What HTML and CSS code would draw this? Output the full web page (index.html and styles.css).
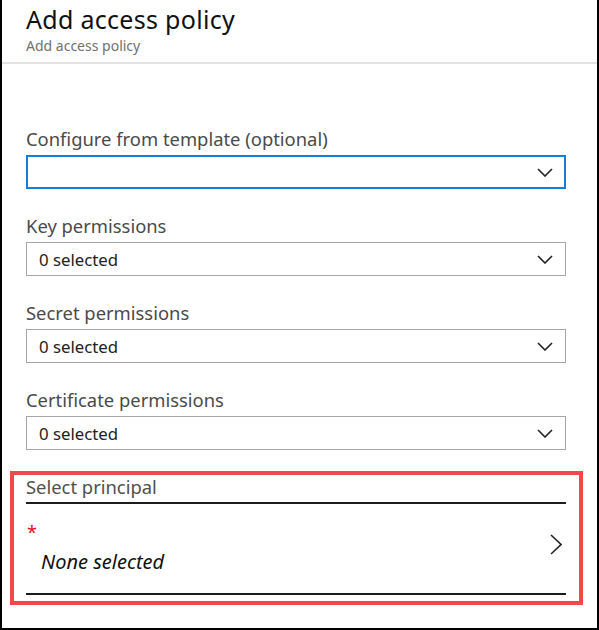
FILE: index.html
```html
<!DOCTYPE html>
<html>
<head>
<meta charset="utf-8">
<link rel="stylesheet" href="styles.css">
</head>
<body>
<div class="panel">
  <header class="head">
    <h1 class="title">Add access policy</h1>
    <div class="subtitle">Add access policy</div>
  </header>
  <div class="body">
    <div class="field">
      <div class="label">Configure from template (optional)</div>
      <div class="select focus">
        <span class="value"></span>
        <svg class="chev" width="16" height="9" viewBox="0 0 16 9"><path d="M1 1 L8 8 L15 1" fill="none" stroke="#222" stroke-width="1.6"/></svg>
      </div>
    </div>
    <div class="field">
      <div class="label">Key permissions</div>
      <div class="select">
        <span class="value">0 selected</span>
        <svg class="chev" width="16" height="9" viewBox="0 0 16 9"><path d="M1 1 L8 8 L15 1" fill="none" stroke="#222" stroke-width="1.6"/></svg>
      </div>
    </div>
    <div class="field">
      <div class="label">Secret permissions</div>
      <div class="select">
        <span class="value">0 selected</span>
        <svg class="chev" width="16" height="9" viewBox="0 0 16 9"><path d="M1 1 L8 8 L15 1" fill="none" stroke="#222" stroke-width="1.6"/></svg>
      </div>
    </div>
    <div class="field">
      <div class="label">Certificate permissions</div>
      <div class="select">
        <span class="value">0 selected</span>
        <svg class="chev" width="16" height="9" viewBox="0 0 16 9"><path d="M1 1 L8 8 L15 1" fill="none" stroke="#222" stroke-width="1.6"/></svg>
      </div>
    </div>
    <div class="highlight">
      <div class="principal-label">Select principal</div>
      <div class="principal">
        <div class="principal-text">
          <span class="star">*</span>
          <span class="none">None selected</span>
        </div>
        <svg class="chev-right" width="12" height="21" viewBox="0 0 12 21"><path d="M1 1 L11 10.5 L1 20" fill="none" stroke="#222" stroke-width="1.6"/></svg>
      </div>
    </div>
  </div>
</div>
</body>
</html>
```
FILE: styles.css
```css
* { box-sizing: border-box; }
html, body { margin: 0; padding: 0; background: #fff; }
body { font-family: "Noto Sans", "Open Sans", sans-serif; color: #222; }

.panel {
  width: 599px;
  height: 630px;
  border-left: 2px solid #000;
  border-right: 2px solid #000;
  border-bottom: 2px solid #000;
}

.head {
  padding: 3px 0 0 24px;
  height: 64px;
  border-bottom: 2px solid #e2e2e2;
}
.title {
  margin: 0;
  font-size: 25px;
  letter-spacing: 0.3px;
  font-weight: 400;
  line-height: 32px;
  color: #111;
}
.subtitle {
  font-size: 14px;
  line-height: 20px;
  color: #707070;
  margin-top: 1px;
}

.body {
  padding: 63px 31px 0 24px;
}
.field { margin-bottom: 25px; }
.label {
  font-size: 18.4px;
  line-height: 24px;
  color: #4a4a4a;
  margin-bottom: 4px;
}
.select {
  height: 34px;
  border: 1px solid #a6a6a6;
  display: flex;
  align-items: center;
  justify-content: space-between;
  padding: 0 12px;
}
.select.focus { border: 2px solid #1b7bd8; padding-right: 11px; }
.value { font-size: 16.8px; color: #222; }
.chev { display: block; }

.highlight {
  margin: -4px -17px 0 -16px;
  border: 4px solid #f24848;
  padding: 0 13px 6px 12px;
}
.principal-label {
  font-size: 18.4px;
  line-height: 24px;
  color: #505050;
  border-bottom: 2px solid #1c1c1c;
  padding-bottom: 3px;
}
.principal {
  height: 91px;
  border-bottom: 2px solid #1c1c1c;
  display: flex;
  align-items: flex-start;
  justify-content: space-between;
  padding: 19px 4px 0 0;
}
.principal-text { display: flex; flex-direction: column; }
.star { color: #e00b1c; font-size: 18px; line-height: 18px; padding-left: 1px; }
.none { font-style: italic; font-size: 20px; line-height: 26px; padding-left: 15px; margin-top: 7.5px; color: #111; }
.chev-right { display: block; margin-top: 11px; }
```
